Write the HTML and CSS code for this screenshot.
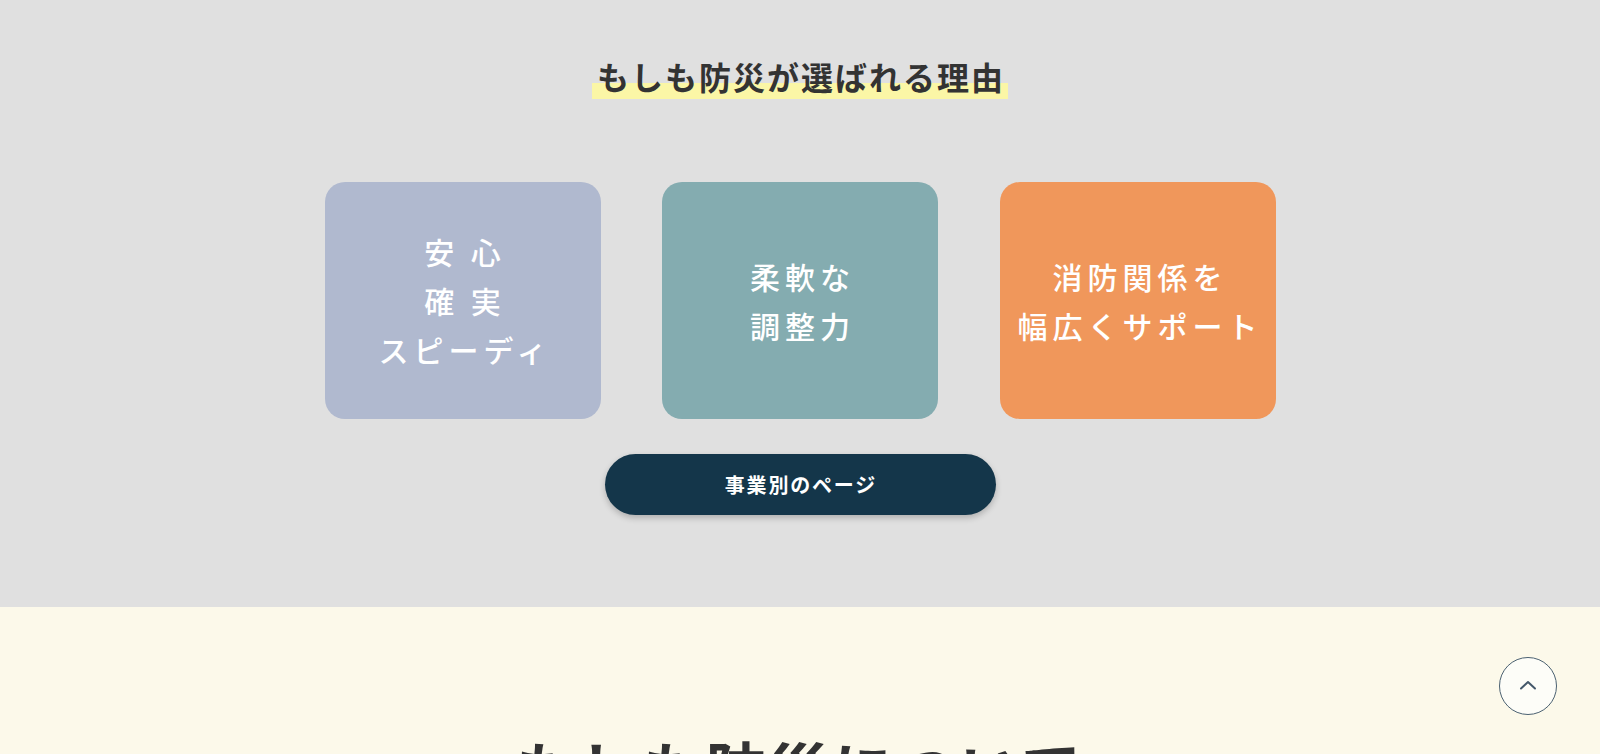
FILE: index.html
```html
<!DOCTYPE html>
<html lang="ja">
<head>
<meta charset="utf-8">
<title>もしも防災が選ばれる理由</title>
<link rel="stylesheet" href="styles.css">
</head>
<body>
<section class="reasons">
  <h2 class="sec-title"><span class="marker">もしも防災が選ばれる理由</span></h2>
  <div class="cards">
    <div class="card card-blue"><p>安 心<br>確 実<br>スピーディ</p></div>
    <div class="card card-teal"><p>柔軟な<br>調整力</p></div>
    <div class="card card-orange"><p>消防関係を<br>幅広くサポート</p></div>
  </div>
  <div class="btn-wrap"><a class="btn" href="#">事業別のページ</a></div>
</section>
<section class="about">
  <h2 class="about-title">もしも防災について</h2>
</section>
<a class="to-top" href="#" aria-label="ページトップへ">
  <svg width="18" height="10" viewBox="0 0 18 10"><path d="M2 8.5 L9 2 L16 8.5" fill="none" stroke="#44586a" stroke-width="2" stroke-linecap="round" stroke-linejoin="round"/></svg>
</a>
</body>
</html>
```
FILE: styles.css
```css
* { box-sizing: border-box; }
html, body { margin: 0; padding: 0; }
body {
  font-family: "Noto Sans CJK JP", "Noto Sans", sans-serif;
  color: #333;
  background: #fcf9ea;
  overflow: hidden;
}
.reasons {
  background: #e0e0e0;
  height: 607px;
  padding-top: 53px;
}
.sec-title {
  margin: 0;
  text-align: center;
  font-size: 32px;
  font-weight: 700;
  line-height: 46px;
  letter-spacing: 2px;
}
.marker {
  display: inline-block;
  padding: 0 3px 0 5px;
  background: linear-gradient(to bottom, transparent 66%, #fbf6a6 66%);
}
.cards {
  margin-top: 83px;
  display: flex;
  justify-content: center;
  gap: 61.5px;
}
.card {
  width: 276px;
  height: 237px;
  border-radius: 20px;
  display: flex;
  align-items: center;
  justify-content: center;
  color: #fff;
  text-align: center;
}
.card p {
  margin: 0;
  font-size: 30px;
  font-weight: 500;
  line-height: 49px;
  letter-spacing: 5px;
  padding-left: 5px;
}
.card-blue { background: #b0b9cf; }
.card-teal { background: #84acb0; }
.card-orange { background: #f0975b; }
.btn-wrap {
  margin-top: 35px;
  display: flex;
  justify-content: center;
}
.btn {
  display: flex;
  align-items: center;
  justify-content: center;
  width: 391px;
  height: 61px;
  border-radius: 31px;
  background: #14364a;
  color: #fff;
  text-decoration: none;
  font-size: 20px;
  font-weight: 700;
  letter-spacing: 1.8px;
  padding-left: 1.8px;
  box-shadow: 0 3px 6px rgba(0,0,0,0.22);
}
.about {
  padding-top: 120px;
  height: 400px;
}
.about-title {
  margin: 0;
  text-align: center;
  font-size: 60px;
  font-weight: 700;
  line-height: 80px;
  letter-spacing: 3.5px;
  color: #333;
}
.to-top {
  position: fixed;
  right: 43px;
  bottom: 39px;
  width: 58px;
  height: 58px;
  border-radius: 50%;
  border: 1.5px solid #4a6070;
  background: #fdfdf8;
  display: flex;
  align-items: center;
  justify-content: center;
  padding-bottom: 2px;
}
```
